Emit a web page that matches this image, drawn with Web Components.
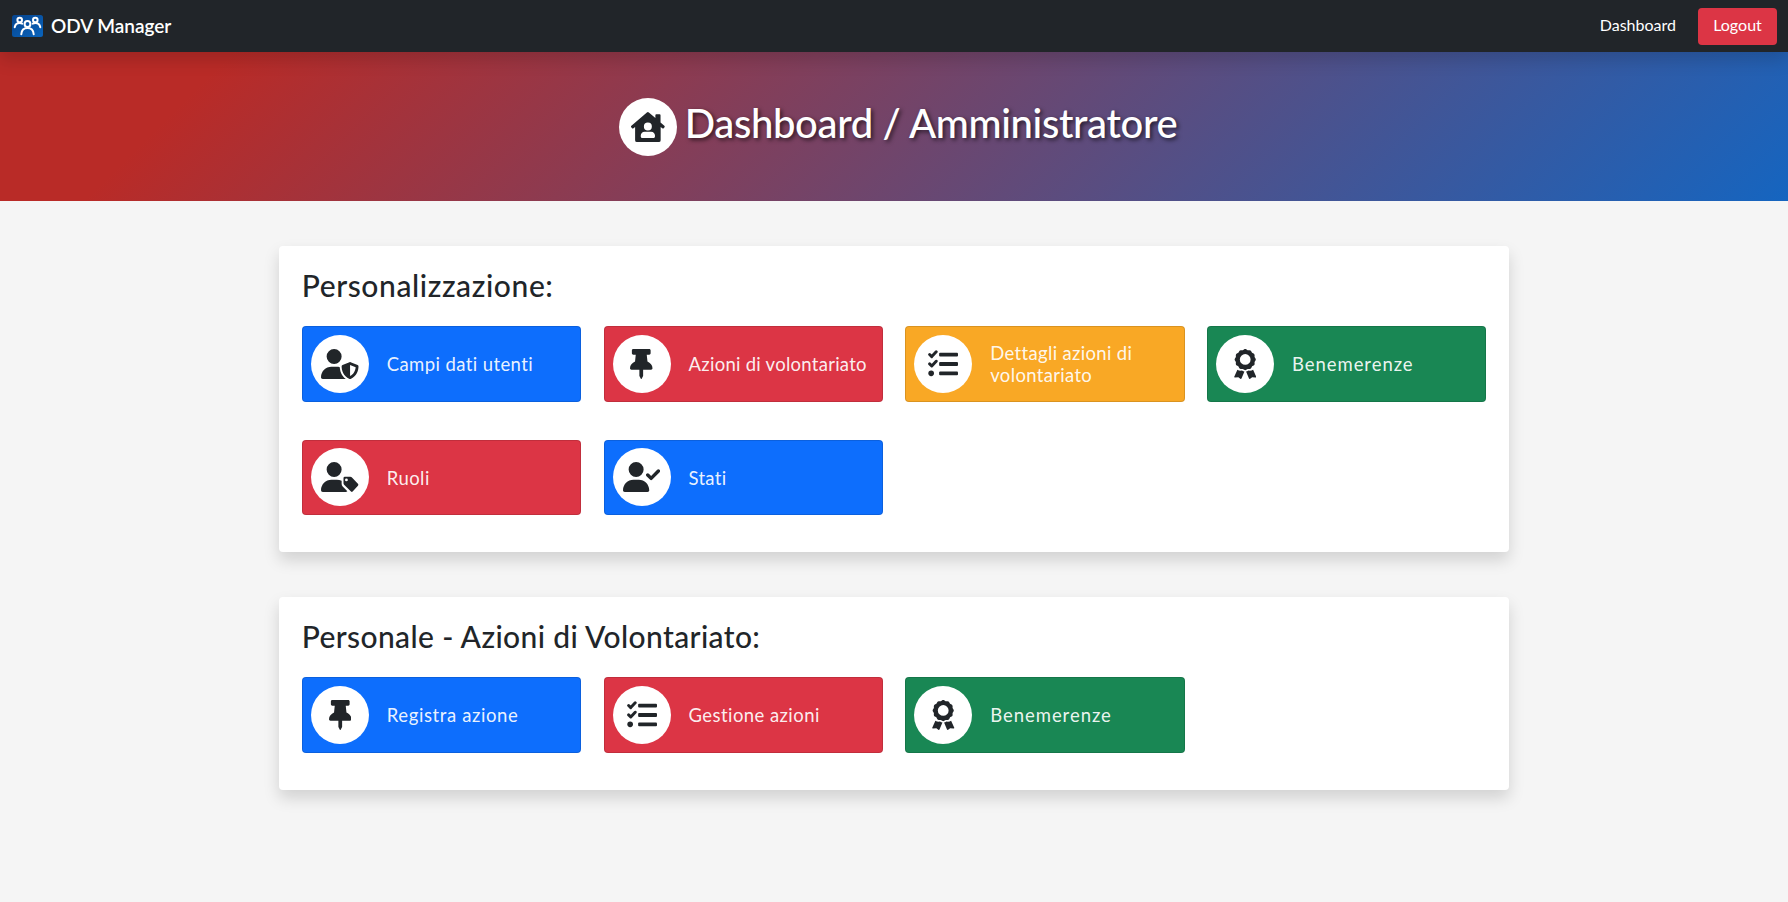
<!DOCTYPE html>
<html lang="it"><head><meta charset="utf-8"><title>ODV Manager</title>
<style>body{margin:0;background:#f5f5f5;color:#212529;font-family:Lato,"Open Sans",sans-serif;font-size:18.5px;font-variant-ligatures:none}</style></head>
<body>
<odv-app></odv-app>
<script>
const ICONS={
house:['576 512','<path fill-rule="evenodd" d="M271 8q17-14 34 0L416 103V54q0-16 16-16h56q16 0 16 16v124l65 56q13 12 3 25l-14 17q-10 12-24 2l-28-23v225q0 32-32 32H102q-32 0-32-32V255l-28 23q-14 10-24-2L4 259q-10-13 3-25zM288 178a68 68 0 1 0 0 136 68 68 0 1 0 0-136zM232 336c-40 0-66 30-66 72 0 20 10 36 28 36h188c18 0 28-16 28-36 0-42-26-72-66-72z"/>'],
shield:['640 512','<path fill-rule="evenodd" d="M224 256A128 128 0 1 0 224 0a128 128 0 1 0 0 256zm-45.700 48C79.800 304 0 383.800 0 482.300C0 498.700 13.300 512 29.700 512h388.600c1.800 0 3.500-.2 5.300-.5c-76.300-55.100-99.800-141-103.100-200.200c-16.100-4.800-33.100-7.300-50.700-7.300zm308.800-78.300l-120 48C358 277.400 352 286.200 352 296c0 63.300 25.900 168.800 134.800 214.200c5.900 2.500 12.600 2.500 18.500 0C614.100 464.800 640 359.300 640 296c0-9.800-6-18.600-15.100-22.300l-120-48c-5.700-2.300-12.100-2.300-17.800 0zM591.400 312c-3.900 50.700-27.200 116.700-95.400 149.700V273.800z"/>'],
pin:['384 512','<path d="M298.028 214.267L285.793 96H328c13.255 0 24-10.745 24-24V24c0-13.255-10.745-24-24-24H56C42.745 0 32 10.745 32 24v48c0 13.255 10.745 24 24 24h42.207L85.972 214.267C37.465 236.820 0 277.261 0 328c0 13.255 10.745 24 24 24h136v104.007c0 1.242.289 2.467.845 3.578l24 48c2.941 5.882 11.364 5.893 14.311 0l24-48a8.008 8.008 0 0 0 .845-3.578V352h136c13.255 0 24-10.745 24-24-.001-51.183-37.983-91.420-85.973-113.733z"/>'],
list:['512 512','<path fill="none" stroke="currentColor" stroke-width="50" stroke-linecap="round" stroke-linejoin="round" d="M28 94l36 36 76-82M28 254l36 36 76-82"/><rect x="190" y="62" width="322" height="68" rx="18"/><rect x="190" y="222" width="322" height="68" rx="18"/><rect x="190" y="382" width="322" height="68" rx="18"/><circle cx="54" cy="415" r="48"/>'],
award:['384 512','<g transform="translate(11 0) scale(.94)"><path fill-rule="evenodd" d="M173.800 5.500c11-7.300 25.400-7.300 36.400 0L228 17.200c6 3.900 13 5.800 20.100 5.400l21.300-1.300c13.200-.8 25.600 6.400 31.500 18.200l9.600 19.100c3.200 6.400 8.400 11.500 14.700 14.700L344.500 83c11.800 5.900 19 18.300 18.200 31.500l-1.300 21.300c-.4 7.100 1.500 14.200 5.400 20.100l11.800 17.800c7.300 11 7.300 25.400 0 36.400L366.800 228c-3.900 6-5.800 13-5.400 20.100l1.300 21.300c.8 13.200-6.400 25.600-18.200 31.500l-19.100 9.600c-6.400 3.200-11.500 8.400-14.700 14.700L301 344.500c-5.900 11.800-18.300 19-31.500 18.200l-21.300-1.300c-7.100-.4-14.200 1.500-20.100 5.400l-17.800 11.800c-11 7.300-25.400 7.300-36.400 0L156 366.800c-6-3.900-13-5.800-20.100-5.400l-21.300 1.300c-13.200.8-25.600-6.400-31.500-18.200l-9.600-19.100c-3.200-6.400-8.400-11.500-14.700-14.700L39.500 301c-11.800-5.900-19-18.300-18.200-31.500l1.300-21.300c.4-7.100-1.500-14.200-5.400-20.100L5.500 210.200c-7.300-11-7.300-25.400 0-36.400L17.200 156c3.900-6 5.800-13 5.400-20.100l-1.300-21.300c-.8-13.200 6.400-25.600 18.200-31.500l19.100-9.600C65 70.200 70.200 65 73.400 58.600L83 39.500c5.900-11.800 18.300-19 31.500-18.200l21.300 1.300c7.100.4 14.200-1.500 20.100-5.400zM290 190a98 98 0 1 0-196 0a98 98 0 1 0 196 0z"/></g><path d="M58 354L4 474Q0 488 16 487L74 480 108 507Q120 516 128 502L178 386Q162 386 136 368 90 376 58 354zM326 354L380 474Q384 488 368 487L310 480 276 507Q264 516 256 502L206 386Q222 386 248 368 294 376 326 354z"/>'],
tag:['640 512','<path fill-rule="evenodd" d="M224 256a128 128 0 1 0 0-256a128 128 0 1 0 0 256zM178 304C80 304 0 384 0 482q0 30 30 30h388q22 0 32-14l-80-82q-18-18-18-44V322q-38-18-82-18zM408 250h92q14 0 24 10L630 372q14 16 0 32L540 504q-14 14-28 0L394 388q-10-10-10-24v-90q0-24 24-24zM434 282a24 24 0 1 0 0 48a24 24 0 1 0 0-48z"/>'],
check:['640 512','<path d="M96 128a128 128 0 1 1 256 0a128 128 0 1 1-256 0zM0 482.300C0 383.800 79.800 304 178.300 304h91.400C368.200 304 448 383.800 448 482.300c0 16.400-13.300 29.700-29.700 29.700H29.700C13.300 512 0 498.700 0 482.300z"/><path fill="none" stroke="currentColor" stroke-width="58" stroke-linecap="round" stroke-linejoin="round" d="M422 222l58 58 124-126"/>']};
function define(name,render){customElements.define(name,class extends HTMLElement{
 connectedCallback(){if(!this.shadowRoot)this.attachShadow({mode:'open'}).innerHTML=render(this)}})}
define('round-icon',e=>{const [v,p]=ICONS[e.getAttribute('name')];return `<style>:host{display:flex;flex:none;width:58px;height:58px;border-radius:50%;background:#fff;color:#212529;align-items:center;justify-content:center}svg{height:30px;display:block}</style><svg viewBox="0 0 ${v}" fill="currentColor" style="width:${parseInt(v)*30/512}px">${p}</svg>`});
define('odv-logo',()=>`<style>:host{display:block;width:31px;height:22px}svg{display:block}</style><svg width="31" height="22" viewBox="0 0 31 22"><defs><linearGradient id="g" x2="1" y2="1"><stop stop-color="#07448d"/><stop offset="1" stop-color="#0964bd"/></linearGradient></defs><rect width="31" height="22" rx="2.500" fill="url(#g)"/><g fill="none" stroke="#fff" stroke-width="2" stroke-linecap="round"><circle cx="7.700" cy="5" r="2.300"/><circle cx="23.300" cy="5" r="2.300"/><circle cx="15.500" cy="9" r="2.900"/><path d="M2.700 12.300c.5-2.600 2.300-4.200 5-4.200q1.400 0 2.500.5M28.300 12.300c-.5-2.600-2.300-4.200-5-4.200q-1.400 0-2.500.5M9.300 19.300c.3-4.200 2.600-6.300 6.200-6.300s5.900 2.100 6.200 6.300"/></g></svg>`);
define('nav-bar',()=>`<style>:host{display:flex;height:52px;background:#212529;align-items:center;justify-content:space-between;padding:0 11px 0 12px;box-sizing:border-box;color:#fff;position:relative;box-shadow:0 8px 16px rgba(0,0,0,.15)}div{display:flex;align-items:center}.brand{gap:8px;font-size:19px;font-weight:600;letter-spacing:-.03px}.brand span{padding-bottom:1px}.links{font-size:16px;gap:22px}.links span{padding-bottom:3px}.links .out{box-sizing:border-box;width:79px;height:37px;border-radius:4px;background:#dc3545;display:flex;align-items:center;justify-content:center}</style><div class="brand"><odv-logo></odv-logo><span>ODV Manager</span></div><div class="links"><span>Dashboard</span><span class="out">Logout</span></div>`);
define('page-hero',()=>`<style>:host{display:flex;box-sizing:border-box;height:149px;justify-content:center;padding:45.500px 0 0 8px;gap:8px;background:linear-gradient(135deg,#b92b27 12%,#1565c0);color:#fff}h1{margin:0;font-size:40px;line-height:51px;font-weight:500;letter-spacing:-.35px;text-shadow:2px 2px 4px rgba(0,0,0,.65)}</style><round-icon name="house"></round-icon><h1><slot></slot></h1>`);
define('tile-button',e=>`<style>:host{display:flex;box-sizing:border-box;min-height:75.500px;align-items:center;padding:7.700px 8px;gap:18px;border:1px solid rgba(0,0,0,.12);border-radius:4px;background:${e.getAttribute('color')};color:rgba(255,255,255,.93);line-height:22.500px;align-self:start}span{letter-spacing:${e.getAttribute('track')}px;padding-top:1px;margin-right:-6px}</style><round-icon name="${e.getAttribute('icon')}"></round-icon><span><slot></slot></span>`);
define('panel-card',e=>`<style>:host{display:block;box-sizing:border-box;background:#fff;border-radius:4px;padding:21px 22.500px 37px;box-shadow:0 8px 16px rgba(0,0,0,.15)}h2{margin:0 0 23px;font-size:30px;line-height:36px;font-weight:500;letter-spacing:${e.getAttribute('track')}px}div{display:grid;grid-template-columns:repeat(4,minmax(0,1fr));column-gap:22.500px;row-gap:38px}</style><h2>${e.getAttribute('heading')}</h2><div><slot></slot></div>`);
define('odv-app',()=>`<style>:host{display:block;min-height:902px;background:#f5f5f5}main{width:1229.500px;margin:45px auto 0;display:grid;grid-template-columns:minmax(0,1fr);gap:45px}.a{height:306px}.b{height:193px}</style><nav-bar></nav-bar><page-hero>Dashboard / Amministratore</page-hero><main><panel-card class="a" track=".6" heading="Personalizzazione:"><tile-button icon="shield" color="#0d6efd" track=".4">Campi dati utenti</tile-button><tile-button icon="pin" color="#dc3545" track=".27">Azioni di volontariato</tile-button><tile-button icon="list" color="#f9a825" track=".33">Dettagli azioni di volontariato</tile-button><tile-button icon="award" color="#198754" track=".95">Benemerenze</tile-button><tile-button icon="tag" color="#dc3545" track=".45">Ruoli</tile-button><tile-button icon="check" color="#0d6efd" track=".3">Stati</tile-button></panel-card><panel-card class="b" track=".37" heading="Personale - Azioni di Volontariato:"><tile-button icon="pin" color="#0d6efd" track=".6">Registra azione</tile-button><tile-button icon="list" color="#dc3545" track=".43">Gestione azioni</tile-button><tile-button icon="award" color="#198754" track=".95">Benemerenze</tile-button></panel-card></main>`);
</script></body></html>
